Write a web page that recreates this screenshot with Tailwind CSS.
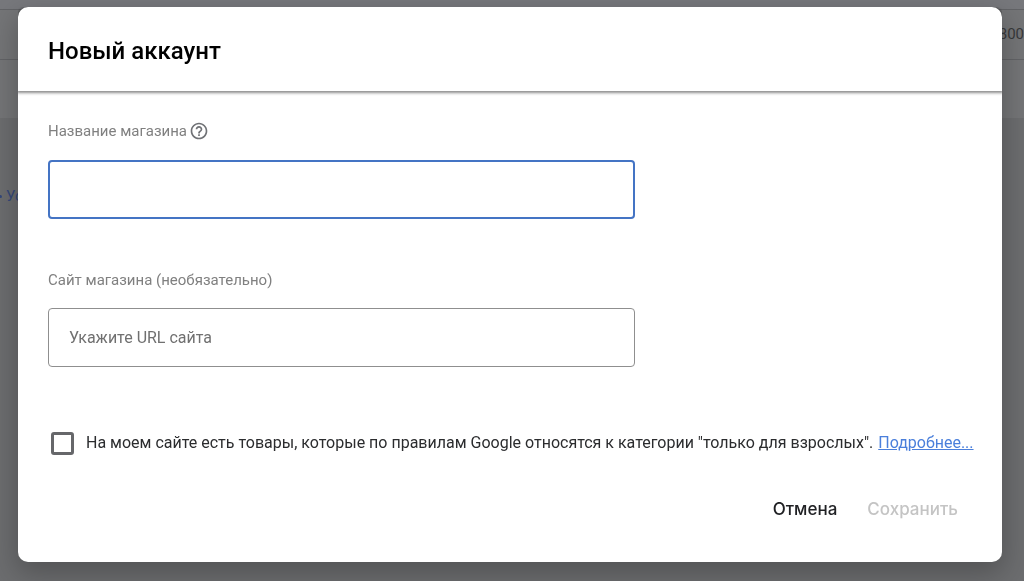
<!DOCTYPE html>
<html lang="ru">
<head>
    <meta charset="UTF-8">
    <meta name="viewport" content="width=device-width, initial-scale=1.0">
    <title>Новый аккаунт</title>

    <!-- Tailwind CSS -->
    <script src="https://cdn.jsdelivr.net/npm/@tailwindcss/browser@4"></script>
</head>
<body class="min-h-screen overflow-hidden bg-[#6c6d6f] font-[Roboto,sans-serif]">
    <!-- Page behind the dialog -->
    <div aria-hidden="true">
        <div class="h-[10px] border-b border-[#626366] bg-[#77787c]"></div>
        <div class="flex h-[50px] items-center justify-end border-b border-[#626366] bg-[#747577] text-[15px] text-[#38393b]">
            <span>800</span>
        </div>
        <div class="h-[58px] bg-[#747577]"></div>
        <div class="flex h-[156px] items-center gap-1 text-[15px] text-[#35487a]">
            <span class="h-[3px] w-[2px] rounded-r-full bg-[#35487a]"></span>
            <span>Ус</span>
        </div>
    </div>

    <!-- Dialog -->
    <div class="fixed inset-0 pt-[7px] pr-[22px] pb-[19px] pl-[18px]">
        <section role="dialog" aria-labelledby="dialog-title" class="flex h-full flex-col rounded-[10px] bg-white shadow-[0_10px_28px_2px_rgba(0,0,0,0.24)]">
            <header class="flex h-[84px] shrink-0 items-center rounded-t-[10px] px-[30px] pt-1 shadow-[0_1px_3px_1px_rgba(0,0,0,0.45)] [clip-path:inset(0_0_-8px_0)]">
                <h1 id="dialog-title" class="text-2xl font-medium text-black">Новый аккаунт</h1>
            </header>

            <form class="flex grow flex-col px-[30px]">
                <div class="mt-7 flex h-6 items-center gap-[2px]">
                    <label for="store-name" class="text-[15px] text-[#808080]">Название магазина</label>
                    <button type="button" aria-label="Справка" class="text-[#6f7175]">
                        <svg class="size-[20px]" viewBox="0 0 24 24" fill="currentColor">
                            <path d="M11 18h2v-2h-2v2zm1-16C6.48 2 2 6.48 2 12s4.48 10 10 10 10-4.48 10-10S17.52 2 12 2zm0 18c-4.41 0-8-3.59-8-8s3.59-8 8-8 8 3.59 8 8-3.59 8-8 8zm0-14c-2.21 0-4 1.79-4 4h2c0-1.1.9-2 2-2s2 .9 2 2c0 2-3 1.75-3 5h2c0-2.25 3-2.5 3-5 0-2.21-1.79-4-4-4z"/>
                        </svg>
                    </button>
                </div>
                <input id="store-name" type="text" class="mt-[17px] h-[59px] w-[587px] max-w-full rounded-[4px] border-2 border-[#4474c4] px-5 text-base outline-none">

                <label for="store-url" class="mt-[49px] h-6 text-[15px] leading-6 text-[#808080]">Сайт магазина (необязательно)</label>
                <input id="store-url" type="url" placeholder="Укажите URL сайта" class="mt-4 h-[59px] w-[587px] max-w-full rounded-[4px] border border-[#8f8f8f] px-5 text-base outline-none placeholder:text-[#707070]">

                <div class="mt-16 flex h-6 items-center whitespace-nowrap text-base text-[#2b2c2e]">
                    <input id="adult" type="checkbox" class="mr-3 ml-[3px] size-[23px] shrink-0 appearance-none rounded-[3px] border-[3px] border-[#66676a]">
                    <label for="adult">На моем сайте есть товары, которые по правилам Google относятся к категории "только для взрослых".</label>
                    <a href="#" class="ml-[5px] text-[#4a7fdb] underline">Подробнее...</a>
                </div>

                <div class="mt-[37px] flex justify-end gap-[30px] pr-[14px] font-[Inter,sans-serif] text-[17px] font-medium">
                    <button type="button" class="h-9 text-[#202124]">Отмена</button>
                    <button type="submit" disabled class="h-9 text-[#c4c4c4]">Сохранить</button>
                </div>
            </form>
        </section>
    </div>
</body>
</html>
